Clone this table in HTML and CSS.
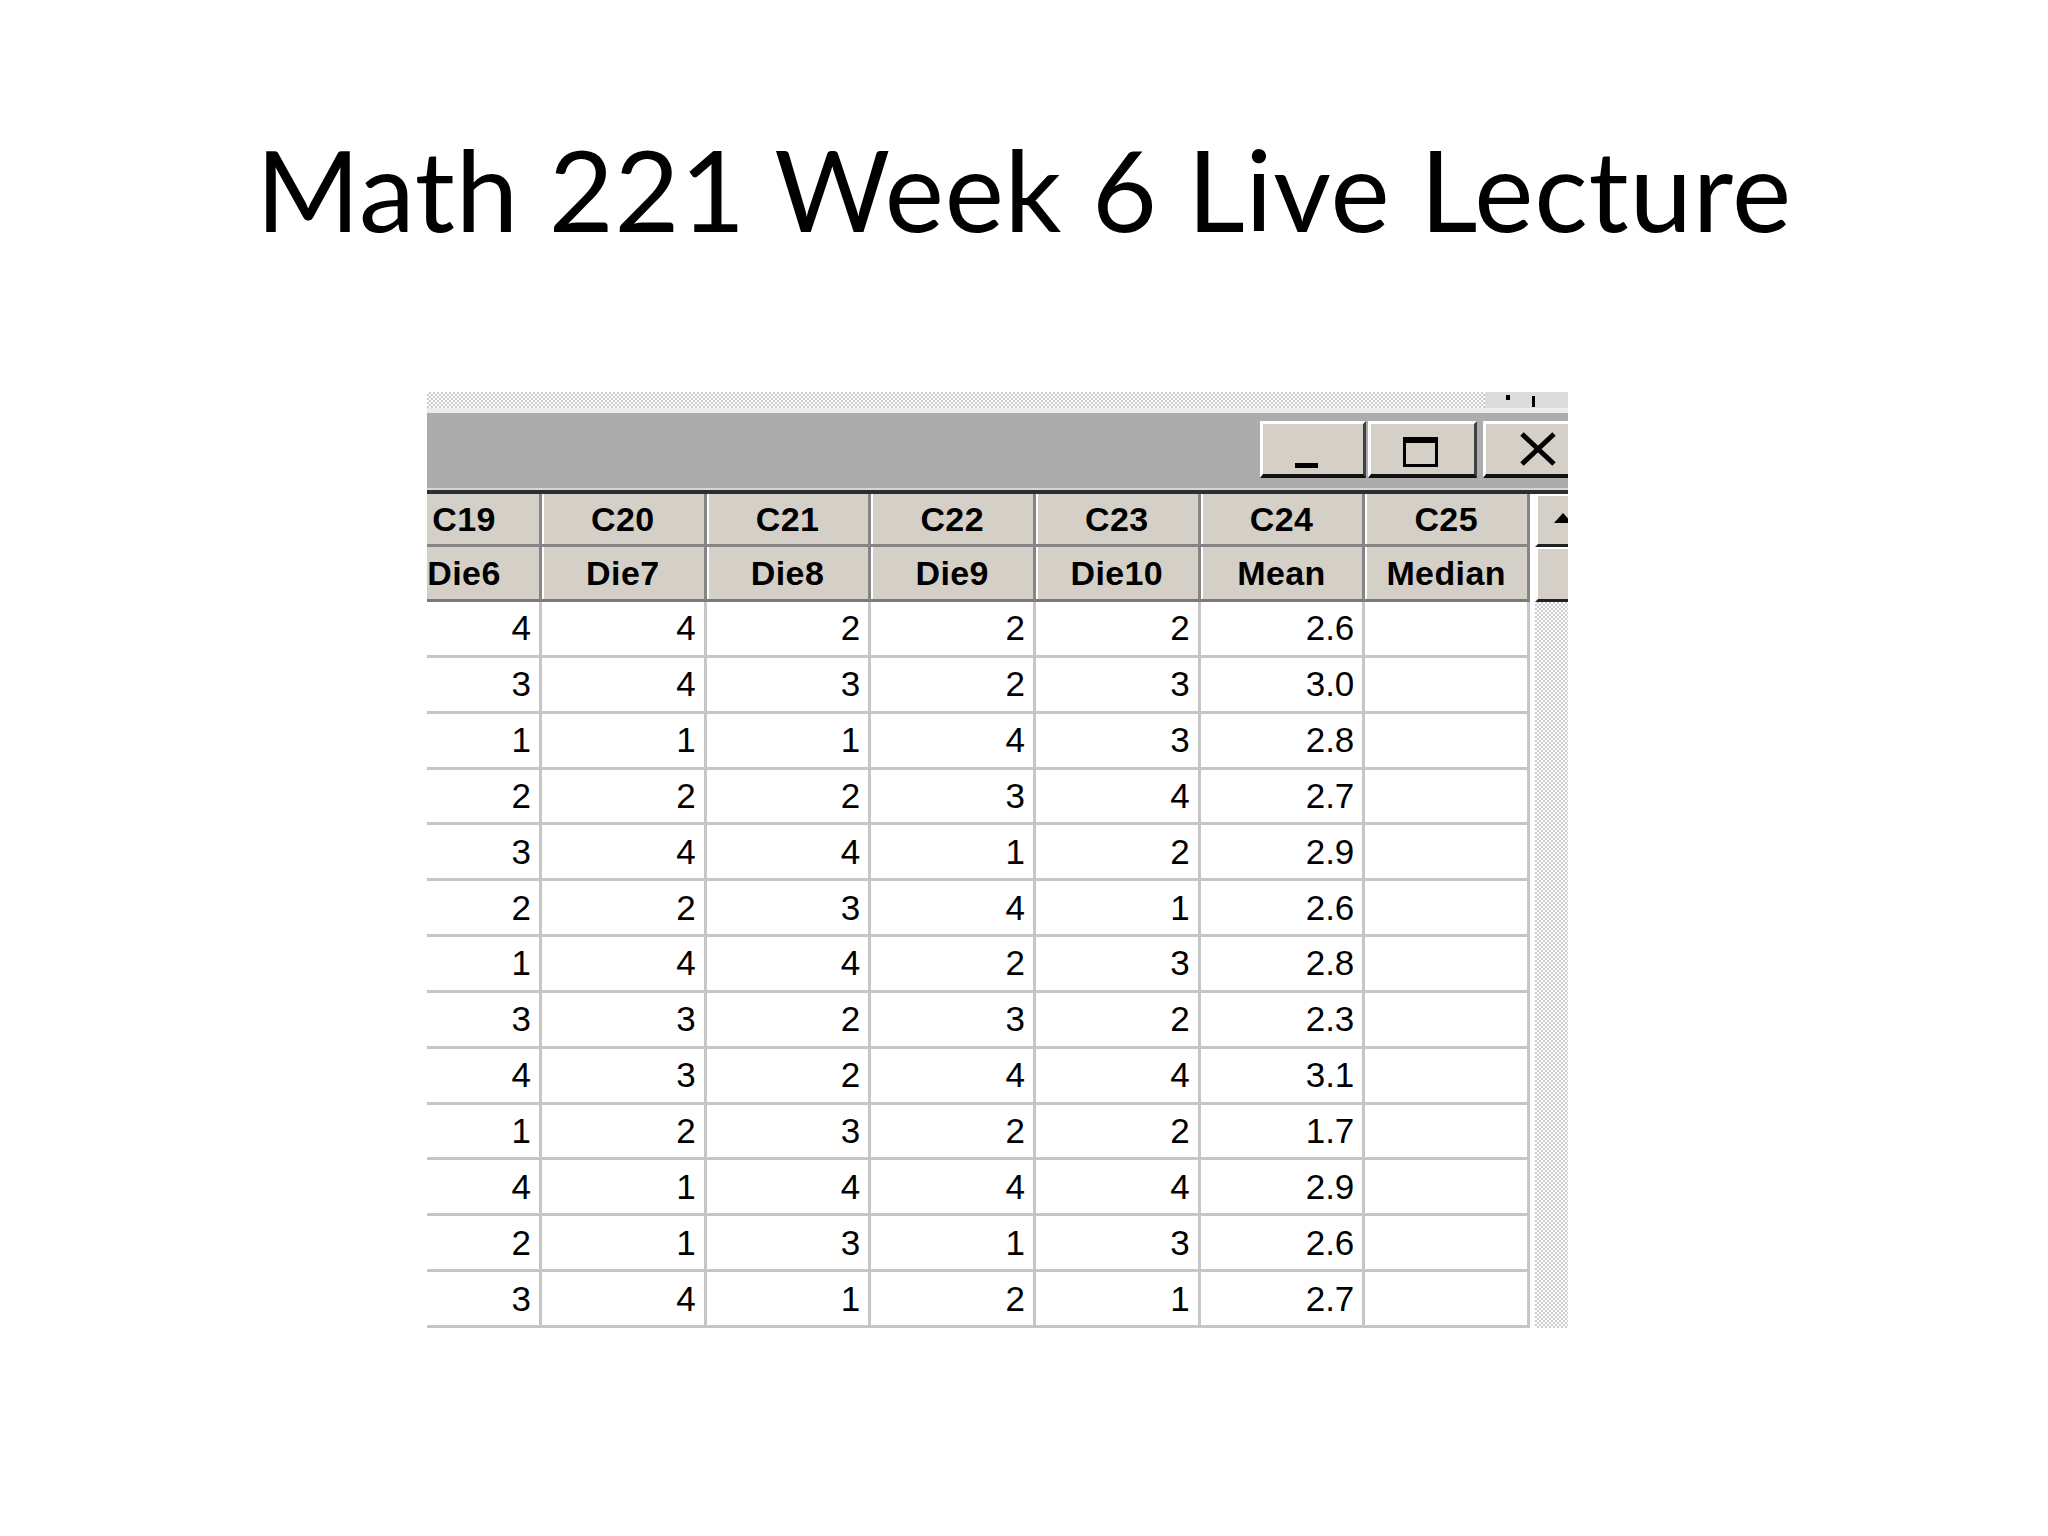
FILE: index.html
```html
<!DOCTYPE html>
<html>
<head>
<meta charset="utf-8">
<title>Math 221 Week 6 Live Lecture</title>
<link rel="stylesheet" href="styles.css">
</head>
<body>
<h1 class="title">Math 221 Week 6 Live Lecture</h1>
<div class="window">
  <div class="strip">
    <div class="strip-fill"></div>
    <div class="strip-end"><span class="mark-a"></span><span class="mark-b"></span></div>
  </div>
  <div class="titlebar">
    <div class="btns">
      <div class="btn btn-min"><span class="glyph-min"></span></div>
      <div class="btn btn-max"><span class="glyph-max"></span></div>
      <div class="btn btn-close">
        <svg class="glyph-close" width="38" height="34" viewBox="0 0 38 34"><path d="M3 2 L35 32 M35 2 L3 32" stroke="#000" stroke-width="5" fill="none"/></svg>
      </div>
    </div>
  </div>
  <div class="sep"></div>
  <div class="body">
    <div class="sheet">
      <div class="grid">
        <div class="hc">C19</div><div class="hc">C20</div><div class="hc">C21</div><div class="hc">C22</div><div class="hc">C23</div><div class="hc">C24</div><div class="hc">C25</div>
        <div class="hc hc2">Die6</div><div class="hc hc2">Die7</div><div class="hc hc2">Die8</div><div class="hc hc2">Die9</div><div class="hc hc2">Die10</div><div class="hc hc2">Mean</div><div class="hc hc2">Median</div>

        <div class="dc">4</div><div class="dc">4</div><div class="dc">2</div><div class="dc">2</div><div class="dc">2</div><div class="dc">2.6</div><div class="dc"></div>
        <div class="dc">3</div><div class="dc">4</div><div class="dc">3</div><div class="dc">2</div><div class="dc">3</div><div class="dc">3.0</div><div class="dc"></div>
        <div class="dc">1</div><div class="dc">1</div><div class="dc">1</div><div class="dc">4</div><div class="dc">3</div><div class="dc">2.8</div><div class="dc"></div>
        <div class="dc">2</div><div class="dc">2</div><div class="dc">2</div><div class="dc">3</div><div class="dc">4</div><div class="dc">2.7</div><div class="dc"></div>
        <div class="dc">3</div><div class="dc">4</div><div class="dc">4</div><div class="dc">1</div><div class="dc">2</div><div class="dc">2.9</div><div class="dc"></div>
        <div class="dc">2</div><div class="dc">2</div><div class="dc">3</div><div class="dc">4</div><div class="dc">1</div><div class="dc">2.6</div><div class="dc"></div>
        <div class="dc">1</div><div class="dc">4</div><div class="dc">4</div><div class="dc">2</div><div class="dc">3</div><div class="dc">2.8</div><div class="dc"></div>
        <div class="dc">3</div><div class="dc">3</div><div class="dc">2</div><div class="dc">3</div><div class="dc">2</div><div class="dc">2.3</div><div class="dc"></div>
        <div class="dc">4</div><div class="dc">3</div><div class="dc">2</div><div class="dc">4</div><div class="dc">4</div><div class="dc">3.1</div><div class="dc"></div>
        <div class="dc">1</div><div class="dc">2</div><div class="dc">3</div><div class="dc">2</div><div class="dc">2</div><div class="dc">1.7</div><div class="dc"></div>
        <div class="dc">4</div><div class="dc">1</div><div class="dc">4</div><div class="dc">4</div><div class="dc">4</div><div class="dc">2.9</div><div class="dc"></div>
        <div class="dc">2</div><div class="dc">1</div><div class="dc">3</div><div class="dc">1</div><div class="dc">3</div><div class="dc">2.6</div><div class="dc"></div>
        <div class="dc">3</div><div class="dc">4</div><div class="dc">1</div><div class="dc">2</div><div class="dc">1</div><div class="dc">2.7</div><div class="dc"></div>
      </div>
    </div>
    <div class="vscroll">
      <div class="sb-up"><span class="tri"></span></div>
      <div class="sb-thumb"></div>
      <div class="sb-track"></div>
    </div>
  </div>
</div>
</body>
</html>
```
FILE: styles.css
```css
html, body {
  margin: 0;
  padding: 0;
  background: #ffffff;
}

.title {
  margin: 0;
  padding-top: 133px;
  font-family: "Lato", "Open Sans", sans-serif;
  font-weight: 400;
  font-size: 112px;
  line-height: 112px;
  letter-spacing: 0.85px;
  text-align: center;
  color: #000;
}

.window {
  margin-top: 147px;
  margin-left: 427px;
  width: 1141px;
  overflow: hidden;
}

/* dotted strip at top */
.strip {
  height: 16px;
  display: flex;
}
.strip-fill {
  flex: 1;
  background: repeating-conic-gradient(#cccccc 0% 25%, #ffffff 0% 50%) 0 0 / 4px 4px;
}
.strip-end {
  width: 83px;
  background: #dcdcdc;
  display: flex;
  align-items: flex-start;
}
.mark-a {
  width: 4px;
  height: 5px;
  margin-top: 3px;
  margin-left: 21px;
  background: #000;
}
.mark-b {
  width: 3px;
  height: 11px;
  margin-top: 4px;
  margin-left: 22px;
  background: #000;
}

/* title bar */
.titlebar {
  height: 67px;
  border-top: 5px solid #ececec;
  background: #acacac;
  display: flex;
  justify-content: flex-end;
  align-items: flex-start;
  padding-top: 8px;
}
.btns {
  display: flex;
  margin-right: -24px;
}
.btn {
  height: 57px;
  box-sizing: border-box;
  background: #d4d0c8;
  border-top: 3px solid #ffffff;
  border-left: 3px solid #ffffff;
  border-right: 3px solid #404040;
  border-bottom: 4px solid #111111;
  display: flex;
}
.btn-min {
  width: 106px;
  padding-left: 32px;
  padding-top: 39px;
}
.btn-max {
  width: 109px;
  margin-left: 2px;
  padding-left: 32px;
  padding-top: 13px;
}
.btn-close {
  width: 109px;
  margin-left: 6px;
  padding-left: 33px;
  padding-top: 8px;
}
.glyph-min {
  width: 23px;
  height: 5px;
  background: #000;
}
.glyph-max {
  width: 35px;
  height: 30px;
  box-sizing: border-box;
  border: 3px solid #000;
  border-top-width: 6px;
}
.glyph-close {
  display: block;
}

.sep {
  height: 2px;
  background: #d6d6d6;
  border-bottom: 4px solid #2e2e2e;
}

/* sheet */
.body {
  display: flex;
}
.sheet {
  width: 1103px;
  overflow: hidden;
}
.grid {
  margin-left: -38px;
  width: 1141px;
  display: grid;
  grid-template-columns: 153px repeat(6, 1fr);
  grid-template-rows: 53px 55px;
  grid-auto-rows: 55.85px;
}
.hc {
  background: #d4d0c8;
  border-right: 3px solid #858585;
  border-bottom: 3px solid #858585;
  box-shadow: inset 2px 0 0 #ffffff;
  display: flex;
  align-items: center;
  justify-content: center;
  font-family: "Liberation Sans", Arial, sans-serif;
  font-weight: 700;
  font-size: 34px;
  letter-spacing: 0.4px;
  color: #000;
}
.hc2 {
  border-bottom-color: #7a7a7a;
}
.dc {
  background: #ffffff;
  border-right: 3px solid #c6c6c6;
  border-bottom: 3px solid #c6c6c6;
  display: flex;
  align-items: center;
  justify-content: flex-end;
  padding-right: 8px;
  font-family: "Liberation Sans", Arial, sans-serif;
  font-size: 35px;
  color: #000;
}

/* vertical scrollbar */
.vscroll {
  width: 38px;
  display: flex;
  flex-direction: column;
}
.sb-up {
  height: 53px;
  box-sizing: border-box;
  margin-left: 5px;
  background: #d4d0c8;
  border-top: 2px solid #ffffff;
  border-left: 3px solid #ffffff;
  border-bottom: 3px solid #222222;
  display: flex;
  padding-top: 17px;
  padding-left: 16px;
}
.tri {
  width: 0;
  height: 0;
  border-left: 9px solid transparent;
  border-right: 9px solid transparent;
  border-bottom: 10px solid #000;
}
.sb-thumb {
  height: 55px;
  box-sizing: border-box;
  margin-left: 5px;
  background: #d4d0c8;
  border-top: 2px solid #ffffff;
  border-left: 3px solid #ffffff;
  border-bottom: 3px solid #222222;
}
.sb-track {
  height: 726px;
  margin-left: 5px;
  background: repeating-conic-gradient(#cccccc 0% 25%, #ffffff 0% 50%) 0 0 / 4px 4px;
}
```
